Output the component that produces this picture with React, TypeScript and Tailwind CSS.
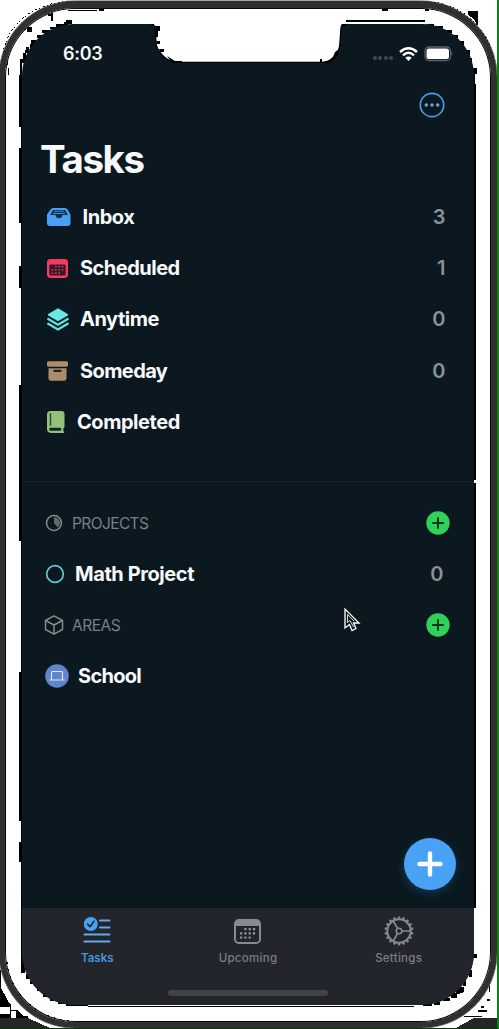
import React from "react";

function Notch() {
  return (
    <svg className="absolute left-[128px] top-[-1px]" width="198" height="40" viewBox="150 23 198 40">
      <path
        d="M150 23H348V24H344Q341 24.500 341 28L340 42C340 53 332 62 321 62H175C166 61 156 51 156 42L155 28Q155 24 150 24Z"
        fill="#fff"
      />
      <path
        d="M150 24Q155 24 155 28L156 42C156 51 166 61 175 62.500H321C332 62.500 340 53 340 42L341 28Q341 24 347 24"
        fill="none"
        stroke="#000"
        strokeWidth="1.300"
      />
      <path d="M155 26h5v5h-2v6h-2zM156 41h4v3h-3zM159 49h5v3h-4zM167 56l8 5h7v2h-10zM320 59h2v3h5l6-5 2-5 4-3v5l-7 7-4 3h-8zM341 25l4-3v4z" fill="#000" />
    </svg>
  );
}

function EdgeMarks() {
  return (
    <svg className="pointer-events-none absolute left-0 top-0" width="499" height="1029" viewBox="0 0 499 1029" shapeRendering="crispEdges">
      <g fill="#000">
        <path d="M19 75h3v52h-3zM19 148h3v75h-3zM19 266h3v22h-3zM19 385h3v156h-3zM19 672h3v149h-3zM19 842h3v20h-3zM21 60h1v900h-1z" />
        <path d="M20 59h5v4h-3v14h-2zM23 53h3v6h-3zM26 47h3v6h-4zM31 40h5v4l-4 4h-2zM37 35h5v3h-5zM42 30h8v3h-8zM50 27h10v2h-10zM56 24h9v3h-9zM64 22h4v3h-4zM66 20h6v4h-6z" />
        <path d="M51 13h2v8h-2v-5h-3v-2h3zM27 27h5v5h-5zM24 29h2v1h-2zM68 10h29v1h-29zM99 8h5v3h-5zM8 68h1v7h-1zM7 62h1v3h-1z" />
        <path d="M346 20h79v2h-79zM382 8h6v3h-6zM425 9h4v2h-4zM468 11h10v15l-5-8-5-3zM427 24h7v2h-7zM435 26h8v2h-8zM444 30h8v3h-8zM453 35h5v4h-5zM460 41h4v7h-4zM466 50h4v7h-4zM470 58h2v8h-2zM473 68h4v6h-2v10h-2zM474 84h2v396h-2zM474 483h2v425h-2z" />
        <path d="M21 955h4v18h-4zM26 974h3v5h-3zM30 981h5v3h-5zM37 987h4v4h-4zM43 993h5v4h-5zM50 998h6v3h-6zM58 1002h7v2h-7zM66 1004h22v2h-22zM88 1006h326v1h-326zM423 1003h9v3h-9zM434 1002h6v3h-6zM443 998h7v3h-7zM451 993h6v5h-6zM456 987h8v5l-5 2h-3zM463 979h3v7h-3zM469 970h3v7h-3zM473 954h4v4h-4z" />
        <path d="M0 970h1v22l6 11 4 8v7h5v-7h-5l-3-7h3v6h6l6 6h5v2h-28v-4h10v-10l-6-9-4-9zM478 1010h9v2h-9zM464 1016h18v1h-18zM481 1006h3v2h-3zM487 999h3v2h-3zM489 985h1v7h-1z" />
      </g>
      <g fill="none" stroke="#000" strokeWidth="1" strokeDasharray="2 2 1 3">
        <path d="M2 61C4 27 30 3 72 1" />
        <path d="M4 65C7 30 33 6 74 3" strokeDasharray="1 4 2 3" />
        <path d="M426 1C465 4 492 31 495 68" />
        <path d="M430 5C460 8 485 29 490 65" strokeDasharray="1 3 3 3" />
        <path d="M7 962C9 990 34 1018 70 1021" strokeDasharray="2 5" />
        <path d="M490 965C487 992 462 1018 430 1021" strokeDasharray="2 5" />
      </g>
      <path d="M0 971L1 988L11 1006V1007H0Z" fill="#000" />
      <path d="M0 1018H28L50 1028H0zM456 1028L474 1018H498V1028z" fill="#252525" />
    </svg>
  );
}

function Wifi() {
  return (
    <svg width="19" height="14" viewBox="0 0 19 14" fill="none" stroke="#fff" strokeWidth="2.400">
      <path d="M1 5Q9.500 -2.500 18 5M4 8.300Q9.500 3.300 15 8.300" />
      <path d="M6.300 10.800Q9.500 8.200 12.700 10.800L9.500 14Z" fill="#fff" stroke="none" />
    </svg>
  );
}

function StatusBar() {
  return (
    <div className="flex h-[59px] items-start pl-[41px] pr-[20px] pt-[20px]">
      <span className="text-[18px] font-semibold leading-[20px] tracking-[-0.300px]">6:03</span>
      <div className="ml-auto flex h-[20px] items-center">
        <div className="mr-[6px] mt-[8px] flex gap-[1.500px]">
          {[0, 1, 2, 3].map((n) => (
            <i key={n} className="h-[4px] w-[4px] rounded-full bg-[#414a51]" />
          ))}
        </div>
        <Wifi />
        <svg className="ml-[6px]" width="30" height="16" viewBox="0 0 30 16">
          <rect x="1" y="1" width="25.500" height="13.500" rx="4" fill="none" stroke="#5b6267" strokeWidth="1.300" />
          <rect x="2.500" y="2.500" width="22.500" height="10.500" rx="2.500" fill="#fff" />
          <path d="M27.500 5.500Q29.500 7.500 27.500 10Z" fill="#5b6267" />
        </svg>
      </div>
    </div>
  );
}

function InboxIcon() {
  return (
    <svg width="24" height="18" viewBox="0 0 24 18">
      <path d="M6 0H18Q19.500 0 20.500 1.500L23.500 6.500V15Q23.500 18 20.500 18H3Q0 18 0 15V6.500L3.500 1.500Q4.500 0 6 0Z" fill="#46a0f5" />
      <path d="M6 2H18L21 7H15.500Q15 10.300 12 10.300T8.500 7H3Z" fill="#0c2d48" />
      <path d="M7 3.300H17M5.800 5.500H18.200" stroke="#3e8fd9" strokeWidth="1" />
    </svg>
  );
}

function CalendarDots({ color }: { color: string }) {
  return (
    <g fill={color}>
      {[0, 1, 2].map((r) =>
        [0, 1, 2, 3].map((c) =>
          (r === 0 && c === 0) || (r === 2 && c === 3) ? null : (
            <rect key={`${r}-${c}`} x={6 + c * 4.300} y={9 + r * 4.200} width="2.200" height="2.200" rx="0.500" />
          ),
        ),
      )}
    </g>
  );
}

function ScheduledIcon() {
  return (
    <svg width="21" height="19" viewBox="0 0 27 25" preserveAspectRatio="none">
      <rect width="27" height="25" rx="4.500" fill="#f23b62" />
      <rect x="3" y="7.200" width="21" height="14.500" rx="1.500" fill="#341828" />
      <CalendarDots color="#c43a5c" />
    </svg>
  );
}

function UpcomingIcon() {
  return (
    <svg width="27" height="25" viewBox="0 0 27 25">
      <rect x="1" y="1" width="25" height="23" rx="3.800" fill="none" stroke="#868b90" strokeWidth="2" />
      <path d="M1 7V4Q1 1 4 1H23Q26 1 26 4V7Z" fill="#868b90" />
      <CalendarDots color="#969a9e" />
    </svg>
  );
}

function StackIcon() {
  return (
    <svg width="22" height="23" viewBox="0 0 22 23">
      <path d="M11 0.300L20.700 6Q21.600 6.800 20.700 7.500L11 13.200L1.200 7.500Q0.300 6.800 1.200 6Z" fill="#67e8e6" />
      <path d="M1.200 11L11 16.700L20.700 11M1.200 15.700L11 21.500L20.700 15.700" fill="none" stroke="#67dfe0" strokeWidth="2.200" strokeLinejoin="round" strokeLinecap="round" />
    </svg>
  );
}

function ArchiveIcon() {
  return (
    <svg width="21" height="20" viewBox="0 0 21 20" fill="#ad8c67">
      <rect x="0" y="0.300" width="21" height="5.500" rx="1.500" />
      <path d="M1.500 7.300H19.500V17Q19.500 19.700 16.700 19.700H4.300Q1.500 19.700 1.500 17Z" />
      <rect x="6.300" y="8.800" width="8.400" height="2.200" rx="1" fill="#18242c" />
    </svg>
  );
}

function BookIcon() {
  return (
    <svg width="18" height="22" viewBox="0 0 18 22">
      <path d="M3.500 0H14.500Q17.500 0 17.500 3V15.500Q17.500 17 16.300 17.500V20.300Q18.500 21.500 16 22H4Q0 21.500 0 18V3.500Q0 0 3.500 0Z" fill="#94c27d" />
      <path d="M3.500 2.700V14.300" stroke="#2e4a3e" strokeWidth="1.500" strokeLinecap="round" />
      <rect x="2.300" y="16.700" width="12" height="3" rx="1.200" fill="#14242b" />
    </svg>
  );
}

function NavRow({ icon, label, count, gap, tracking }: { icon: React.ReactNode; label: string; count?: number; gap: string; tracking: string }) {
  return (
    <div className="flex h-[51.200px] items-center pl-[25px] pr-[28.500px]">
      {icon}
      <span className={`text-[20px] font-[650] leading-[24px] ${gap} ${tracking}`}>{label}</span>
      {count !== undefined && <span className="ml-auto text-[20px] font-semibold leading-[24px] text-[#8b9196]">{count}</span>}
    </div>
  );
}

function AddButton() {
  return (
    <svg className="ml-auto" width="24" height="24" viewBox="0 0 24 24">
      <circle cx="12" cy="12" r="11.700" fill="#30d158" />
      <path d="M7 12H17M12 7V17" stroke="#08351d" strokeWidth="2" strokeLinecap="round" />
    </svg>
  );
}

function SettingsIcon() {
  const teeth = Array.from({ length: 18 }, (_, i) => i * 20);
  return (
    <svg width="30" height="30" viewBox="0 0 30 30" fill="none" stroke="#868b90">
      <circle cx="15" cy="15" r="11.700" strokeWidth="1.900" />
      {teeth.map((angle) => (
        <path key={angle} d="M14 2.500L14.300 0.800H15.700L16 2.500Z" fill="#868b90" strokeWidth="0.700" transform={`rotate(${angle} 15 15)`} />
      ))}
      <circle cx="15" cy="15" r="2.800" strokeWidth="1.600" />
      <path d="M18 15H26.500M13.500 12.400L9.200 5M13.500 17.600L9.200 25" strokeWidth="1.700" />
    </svg>
  );
}

function TabBar() {
  return (
    <div className="grid h-[97px] grid-cols-3 bg-[#22262c] pt-[8px] text-[11.500px] font-medium leading-[14px] tracking-[0.280px] text-[#797e83]">
      <div className="flex flex-col items-center text-[#4796df]">
        <svg width="28" height="31" viewBox="0 0 28 31">
          <path d="M17 4.500H26.500M17 11.500H26.500M1.500 18.500H26.500M1.500 25.500H26.500" stroke="#65a9e8" strokeWidth="2.100" strokeLinecap="round" />
          <circle cx="7.800" cy="8" r="7" fill="#4aa2f4" />
          <path d="M4.600 8.200L7 10.700L11 5.200" fill="none" stroke="#1c2b3c" strokeWidth="1.700" strokeLinecap="round" strokeLinejoin="round" />
        </svg>
        <span className="mt-[3.500px] font-semibold tracking-[0.050px]">Tasks</span>
      </div>
      <div className="flex flex-col items-center">
        <div className="flex h-[31px] items-center"><UpcomingIcon /></div>
        <span className="mt-[3.500px]">Upcoming</span>
      </div>
      <div className="flex flex-col items-center">
        <div className="flex h-[30px] items-center"><SettingsIcon /></div>
        <span className="mt-[4.500px]">Settings</span>
      </div>
    </div>
  );
}

export default function App() {
  return (
    <div className="relative h-[1029px] w-[499px] overflow-hidden border-b border-r-2 border-b-[#063606] border-r-[#06840d] bg-white font-['Inter',sans-serif] text-[#f7f9fa]">
      <EdgeMarks />
      <div className="relative ml-[-1px] mt-px h-[1027px] w-[498px] rounded-[76px] border-[6px] border-t-[7px] border-[#303030] pl-[17px] pt-[16px] shadow-[inset_0_0_0_1px_#090909,0_0_0_0.500px_#555]">
        <div className="relative flex h-[981px] w-[452px] flex-col overflow-hidden rounded-b-[53px] rounded-t-[52px] bg-[#0b1820]">
          <StatusBar />
          <div className="flex h-[46px] justify-end pr-[28px] pt-[8px]">
            <svg width="28" height="28" viewBox="0 0 28 28">
              <circle cx="14" cy="14" r="11.700" fill="none" stroke="#4c99e2" strokeWidth="1.700" />
              <circle cx="8.300" cy="14" r="1.700" fill="#65a8e8" />
              <circle cx="14" cy="14" r="1.700" fill="#65a8e8" />
              <circle cx="19.700" cy="14" r="1.700" fill="#65a8e8" />
            </svg>
          </div>
          <h1 className="ml-[18px] mt-[7px] h-[55.400px] whitespace-nowrap text-[38.500px] font-bold leading-[46px] tracking-[-1.400px]">Tasks</h1>
          <NavRow icon={<InboxIcon />} label="Inbox" count={3} gap="ml-[11.500px]" tracking="tracking-[-0.450px]" />
          <NavRow icon={<ScheduledIcon />} label="Scheduled" count={1} gap="ml-[12px]" tracking="tracking-[-0.500px]" />
          <NavRow icon={<StackIcon />} label="Anytime" count={0} gap="ml-[11px]" tracking="tracking-[-0.500px]" />
          <NavRow icon={<ArchiveIcon />} label="Someday" count={0} gap="ml-[12px]" tracking="tracking-[-0.600px]" />
          <NavRow icon={<BookIcon />} label="Completed" gap="ml-[12px]" tracking="tracking-[-0.450px]" />
          <div className="mt-[34px] h-px shrink-0 bg-[#17242d]" />
          <div className="mt-[15.500px] flex h-[51px] items-center pl-[23px] pr-[24.500px] text-[16px] text-[#797f84]">
            <svg width="18" height="18" viewBox="0 0 18 18">
              <circle cx="9" cy="9" r="7.500" fill="none" stroke="#858a8d" strokeWidth="1.500" />
              <path d="M9 3.200A5.800 5.800 0 0 1 12.800 13.500L9 9Z" fill="#62696e" />
            </svg>
            <span className="ml-[9px] text-[15.500px] tracking-[-0.600px]">PROJECTS</span>
            <AddButton />
          </div>
          <div className="flex h-[51px] items-center pl-[23px] pr-[30.500px] text-[20px]">
            <svg width="20" height="20" viewBox="0 0 20 20"><circle cx="10" cy="10" r="8.300" fill="none" stroke="#63c9d2" strokeWidth="1.700" /></svg>
            <span className="ml-[10px] font-[650] tracking-[-0.420px]">Math Project</span>
            <span className="ml-auto font-semibold text-[#8b9196]">0</span>
          </div>
          <div className="flex h-[51px] items-center pl-[22px] pr-[24.500px] text-[16px] text-[#797f84]">
            <svg width="20" height="20" viewBox="0 0 20 20" fill="none" stroke="#858b8f" strokeWidth="1.500" strokeLinejoin="round">
              <path d="M10 0.900L18.500 5.500V14.500L10 19.100L1.500 14.500V5.500ZM1.500 5.500L10 10L18.500 5.500M10 10V19" />
            </svg>
            <span className="ml-[8px] text-[15.500px] tracking-[-0.500px]">AREAS</span>
            <AddButton />
          </div>
          <div className="flex h-[51px] items-center pl-[23px] text-[20px]">
            <svg width="24" height="24" viewBox="0 0 24 24">
              <circle cx="12" cy="12" r="11.800" fill="#6085cb" />
              <path d="M6.500 15V8.500Q6.500 7.500 7.500 7.500H16.500Q17.500 7.500 17.500 8.500V15M4.700 16H19.300" fill="none" stroke="#d8e7fb" strokeWidth="1.200" strokeLinecap="round" />
            </svg>
            <span className="ml-[9px] font-[650] tracking-[-0.700px]">School</span>
          </div>
          <div className="mt-auto"><TabBar /></div>
          <div className="absolute bottom-[115px] right-[18.500px] flex h-[52px] w-[52px] items-center justify-center rounded-full bg-[#49a2f5] shadow-[0_3px_9px_#123850]">
            <svg width="26" height="26" viewBox="0 0 26 26"><path d="M13 2.500V23.500M2.500 13H23.500" stroke="#fff" strokeWidth="4.400" strokeLinecap="round" /></svg>
          </div>
          <div className="absolute bottom-[9px] left-[146px] h-[6px] w-[160px] rounded-full bg-[#414345]" />
          <Notch />
          <svg className="absolute left-[321px] top-[583px]" width="18" height="26" viewBox="0 0 18 26">
            <path d="M2 2V21L6.500 17.500L9 23.500L13 21.500L10.500 16H16Z" fill="#101820" stroke="#fff" strokeWidth="1.300" />
            <path d="M4.500 7.500V15.500L7 13.500L10.500 20M4.500 7.500L11 14" fill="none" stroke="#d5d8da" strokeWidth="1" />
          </svg>
        </div>
      </div>
    </div>
  );
}
